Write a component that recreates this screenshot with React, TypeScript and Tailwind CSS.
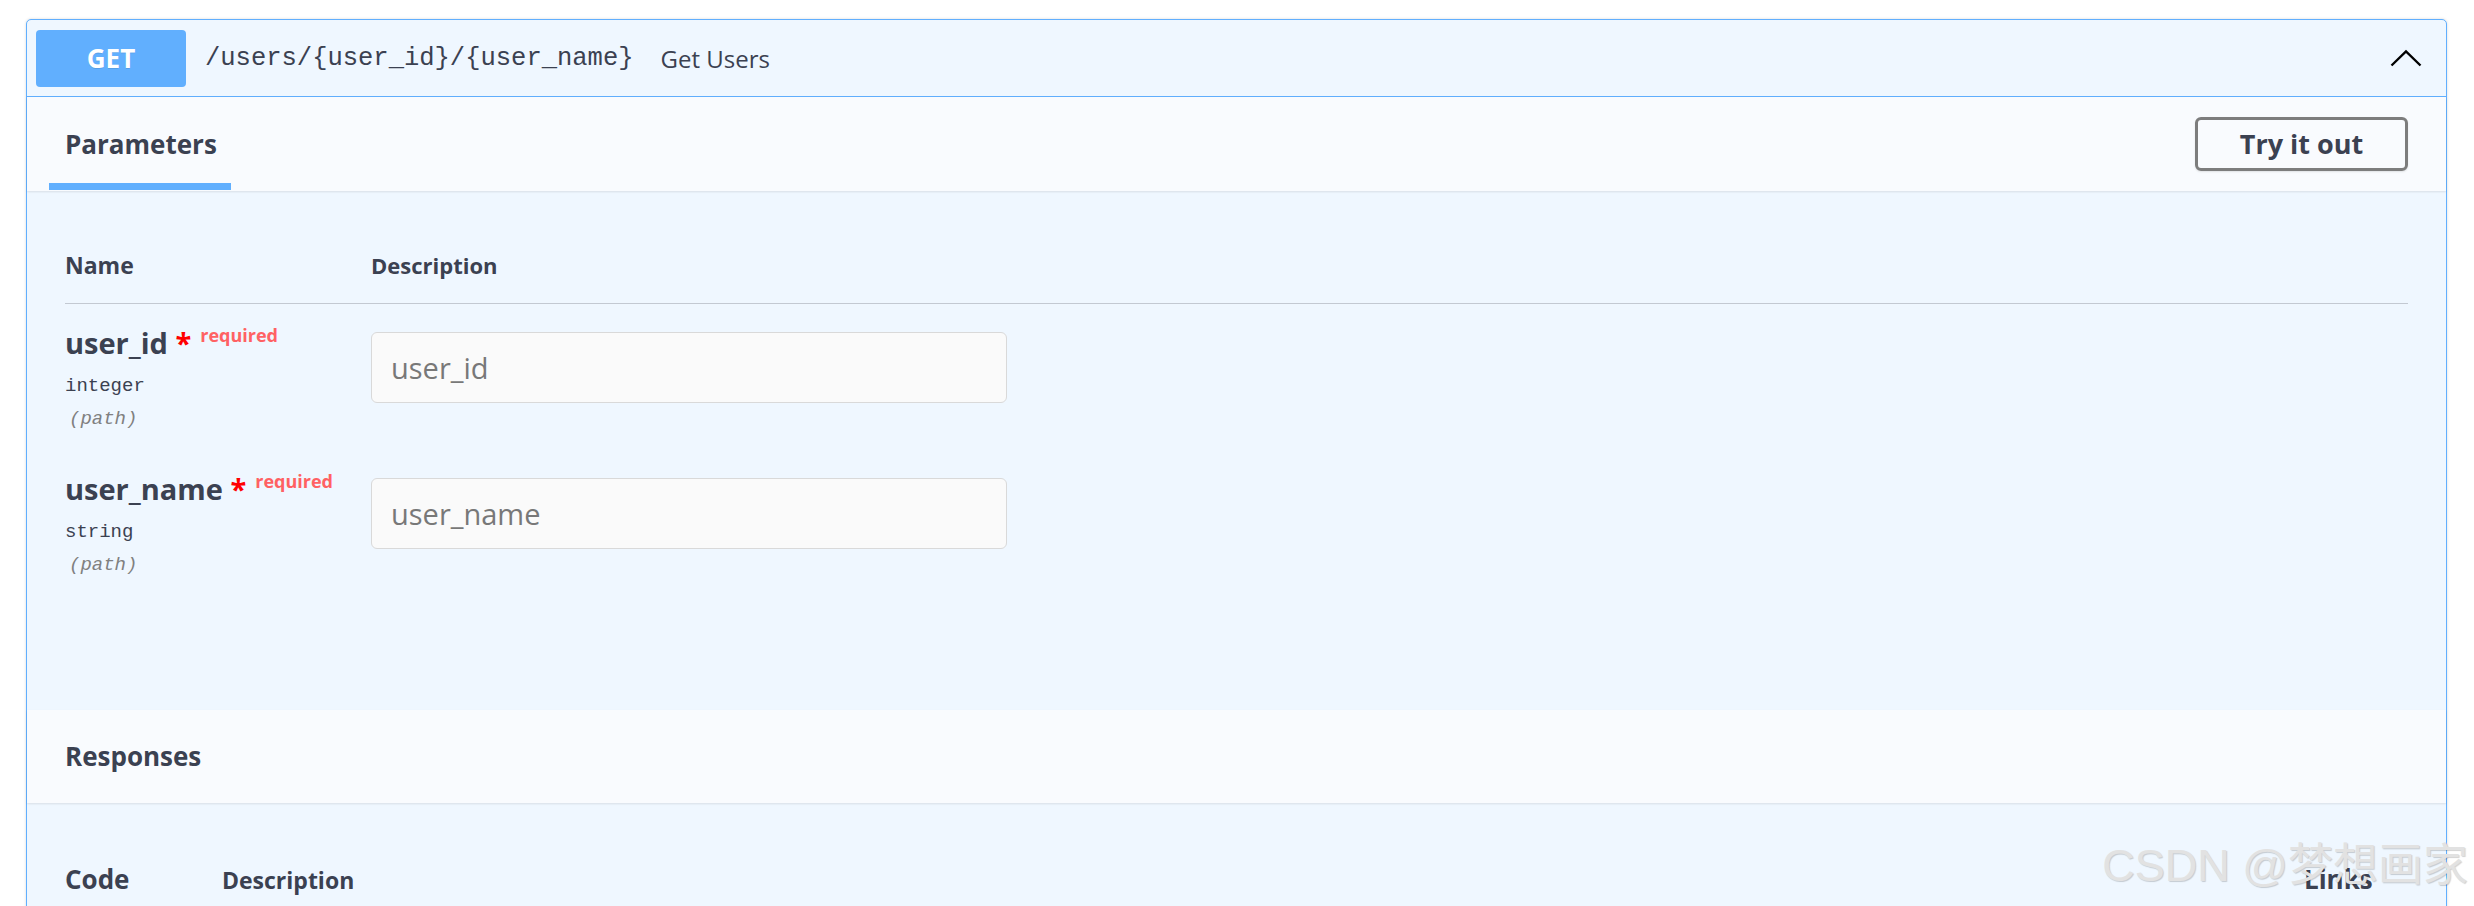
import React from 'react';

type Param = { name: string; type: string };

const params: Param[] = [
  { name: 'user_id', type: 'integer' },
  { name: 'user_name', type: 'string' },
];

function ChevronUp() {
  return (
    <svg width="32" height="18" viewBox="0 0 32 18" fill="none">
      <polyline points="1.5,16.5 16,2.5 30.5,16.5" stroke="#000" strokeWidth="2.4" />
    </svg>
  );
}

function ParamRow({ p }: { p: Param }) {
  return (
    <div className="flex h-[146px] pt-[19px]">
      <div className="w-[306px] shrink-0">
        <div className="flex items-baseline whitespace-nowrap text-[29px] font-bold leading-[39px]">
          <span>{p.name}</span>
          <span className="text-[#ff0000]">&nbsp;*</span>
          <span className="relative top-[-12px] pl-[9px] text-[18px] font-bold text-[#ff6163]">required</span>
        </div>
        <div className="mt-[6px] font-['Liberation_Mono',monospace] text-[19px] leading-[26px] text-[#3b4151]">{p.type}</div>
        <div className="ml-[4px] mt-[7px] font-['Liberation_Mono',monospace] text-[19px] italic leading-[26px] text-[#808080]">(path)</div>
      </div>
      <div className="mt-[9px]">
        <input
          readOnly
          placeholder={p.name}
          className="h-[71px] w-[636px] rounded-[6px] border border-[#d9d9d9] bg-[#fafafa] px-[19px] text-[29px] text-[#3b4151] outline-none placeholder:text-[#787878]"
        />
      </div>
    </div>
  );
}

export default function App() {
  return (
    <div className="relative h-[906px] overflow-hidden bg-white font-['Open_Sans',sans-serif] text-[#3b4151]">
      <div className="ml-[26px] mr-[27px] mt-[19px] rounded-t-[5px] border border-[#61affe] bg-[#eff7ff] shadow-[0_0_3px_rgba(0,0,0,0.15)]">
        <div className="flex h-[77px] items-center border-b border-[#61affe] pl-[9px] pr-[24px]">
          <div className="flex h-[57px] w-[150px] items-center justify-center rounded-[4px] bg-[#61affe] text-[26px] font-bold text-white [text-shadow:0_1px_0_rgba(0,0,0,0.1)]">
            GET
          </div>
          <span className="ml-[19px] pt-[2px] font-['Liberation_Mono',monospace] text-[25.5px] text-[#3b4151]">/users/{'{user_id}'}/{'{user_name}'}</span>
          <span className="ml-[27px] pt-[2px] text-[24px] text-[#3b4151]">Get Users</span>
          <div className="ml-auto flex items-center">
            <ChevronUp />
          </div>
        </div>

        <div className="flex h-[94px] items-center justify-between bg-[#f9fbfe] px-[38px] shadow-[0_1px_2px_rgba(0,0,0,0.1)]">
          <div className="relative flex h-full items-center">
            <h4 className="text-[26px] font-bold">Parameters</h4>
            <div className="absolute bottom-[1px] left-[-16px] right-[-14px] h-[7px] bg-[#61affe]" />
          </div>
          <button className="h-[54px] w-[213px] rounded-[6px] border-[3px] border-[#7d7d7d] bg-transparent text-[27px] font-bold text-[#3b4151] shadow-[0_1px_2px_rgba(0,0,0,0.1)]">
            Try it out
          </button>
        </div>

        <div className="px-[38px] pb-[114px] pt-[59px]">
          <div className="flex border-b border-[#c3c9d2] pb-[22px] text-[23px] font-bold leading-[31px]">
            <div className="w-[306px]">Name</div>
            <div className="text-[22px]">Description</div>
          </div>
          {params.map((p) => (
            <ParamRow key={p.name} p={p} />
          ))}
        </div>

        <div className="flex h-[93px] items-center bg-[#f9fbfe] px-[38px] shadow-[0_1px_2px_rgba(0,0,0,0.1)]">
          <h4 className="text-[26px] font-bold">Responses</h4>
        </div>

        <div className="px-[38px] pb-[200px] pt-[59px]">
          <div className="flex items-baseline font-bold leading-[35px]">
            <div className="w-[157px] text-[26px]">Code</div>
            <div className="flex-1 text-[23px]">Description</div>
            <div className="w-[104px] text-[26px]">Links</div>
          </div>
        </div>
      </div>

      <div className="absolute right-[6px] top-[843px] whitespace-nowrap font-['Liberation_Sans','Noto_Sans_CJK_SC',sans-serif] text-[45px] leading-[45px] text-[#e2e2e2] [text-shadow:1px_1px_1px_rgba(0,0,0,0.18)]">
        CSDN @梦想画家
      </div>
    </div>
  );
}
